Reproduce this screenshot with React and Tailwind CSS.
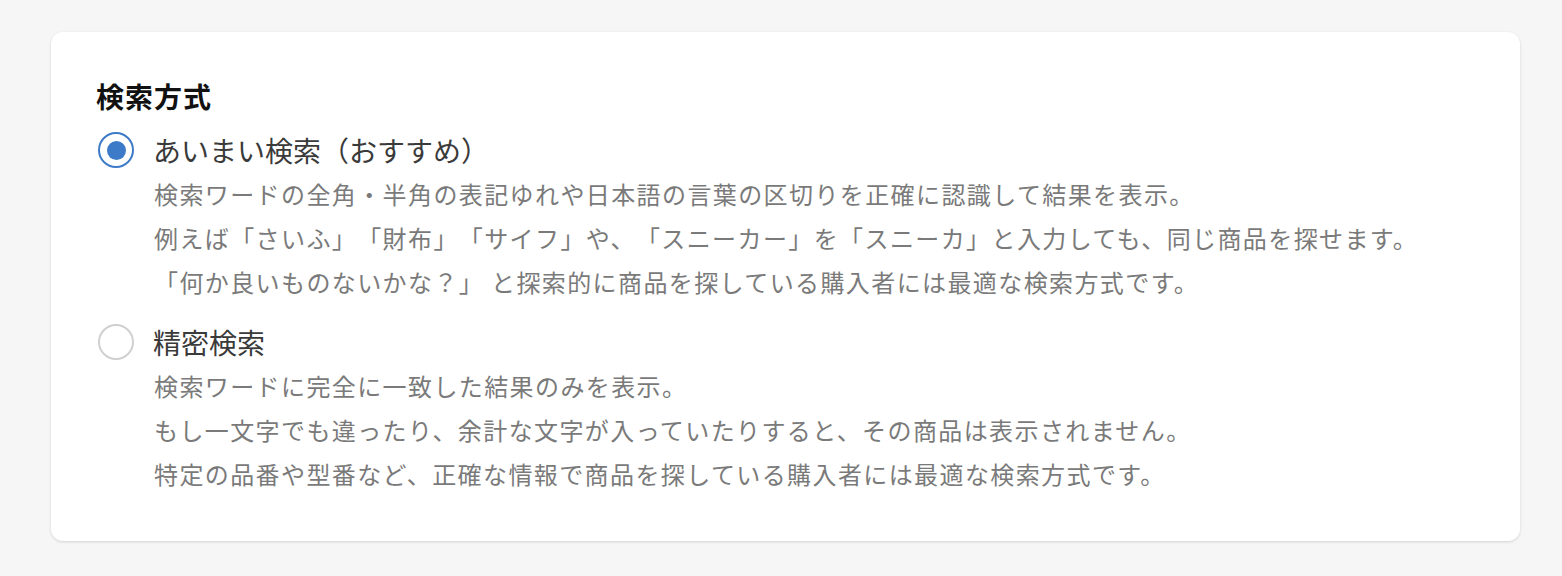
import React from "react";

const options = [
  {
    label: "あいまい検索（おすすめ）",
    selected: true,
    lines: [
      "検索ワードの全角・半角の表記ゆれや日本語の言葉の区切りを正確に認識して結果を表示。",
      "例えば「さいふ」「財布」「サイフ」や、「スニーカー」を「スニーカ」と入力しても、同じ商品を探せます。",
      <>
        「何か良いものないかな？」
        <span className="[font-variant-east-asian:normal]"> </span>
        と探索的に商品を探している購入者には最適な検索方式です。
      </>,
    ],
  },
  {
    label: "精密検索",
    selected: false,
    lines: [
      "検索ワードに完全に一致した結果のみを表示。",
      "もし一文字でも違ったり、余計な文字が入っていたりすると、その商品は表示されません。",
      "特定の品番や型番など、正確な情報で商品を探している購入者には最適な検索方式です。",
    ],
  },
];

function Radio({ selected }) {
  return selected ? (
    <div className="flex h-[36px] w-[36px] shrink-0 items-center justify-center rounded-full border-2 border-[#3d7bc8] bg-white">
      <div className="h-[19px] w-[19px] rounded-full bg-[#3d7bc8]" />
    </div>
  ) : (
    <div className="h-[36px] w-[36px] shrink-0 rounded-full border-2 border-[#d0d0d0] bg-white" />
  );
}

export default function App() {
  return (
    <div
      className="min-h-[576px] bg-[#f6f6f6] pt-[32px] pl-[51px] pr-[42px] [text-spacing-trim:space-all] [font-variant-east-asian:full-width]"
      style={{ fontFamily: '"Noto Sans CJK JP", "Noto Sans", sans-serif' }}
    >
      <div className="rounded-[12px] bg-white pt-[44px] pb-[45px] pl-[45px] shadow-[0_1px_3px_rgba(0,0,0,0.14)]">
        <h2 className="text-[28px] font-bold leading-[40px] tracking-[1px] text-[#111]">検索方式</h2>
        <div className="mt-[12px] flex flex-col gap-[16px]">
          {options.map((o) => (
            <div key={o.label}>
              <div className="flex h-[44px] items-center">
                <div className="ml-[2px]">
                  <Radio selected={o.selected} />
                </div>
                <span className="ml-[19px] text-[28px] leading-[44px] text-[#3a3a3a]">{o.label}</span>
              </div>
              <div className="pl-[58px]">
                {o.lines.map((l, i) => (
                  <p key={i} className="text-[24px] leading-[44px] tracking-[1.4px] text-[#7a7a7a] whitespace-pre">
                    {l}
                  </p>
                ))}
              </div>
            </div>
          ))}
        </div>
      </div>
    </div>
  );
}
